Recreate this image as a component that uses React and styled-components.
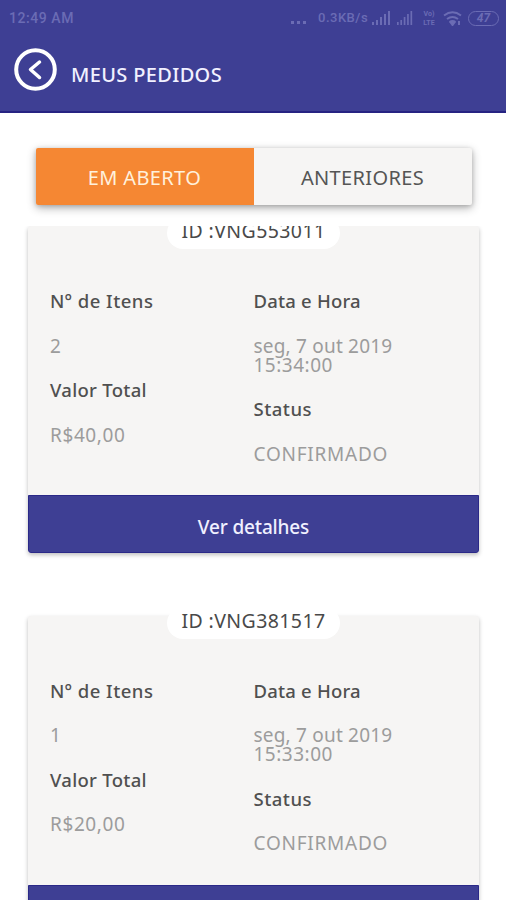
import React from "react";
import styled, { createGlobalStyle } from "styled-components";

const GlobalStyle = createGlobalStyle`
  * { box-sizing: border-box; }
  body {
    margin: 0;
    background: #fff;
    font-family: "Noto Sans", "Open Sans", sans-serif;
    overflow: hidden;
  }
`;

const Screen = styled.main`
  display: flex;
  flex-direction: column;
  width: 506px;
  height: 900px;
  overflow: hidden;
  background: #fff;
`;

const Header = styled.header`
  height: 113px;
  flex: none;
  background: #3e3f94;
  border-bottom: 2px solid #262382;
`;

const StatusBar = styled.div`
  display: flex;
  align-items: center;
  justify-content: space-between;
  height: 36px;
  padding: 0 7px 0 9px;
  color: #6b6cb4;
  font: 500 14px/16px Roboto, sans-serif;
`;

const Clock = styled.span`
  letter-spacing: 0.55px;
`;

const StatusIcons = styled.div`
  display: flex;
  align-items: center;
`;

const Speed = styled.span`
  font-size: 13px;
  width: 51px;
  margin-left: 11px;
  letter-spacing: 0.5px;
  white-space: nowrap;
`;

const VoLte = styled.span`
  display: flex;
  flex-direction: column;
  gap: 1px;
  width: 16px;
  margin: 0 6px 0 8px;
  font: 700 7px/8px Roboto, sans-serif;
  text-align: center;
`;

const Battery = styled.span`
  width: 31px;
  height: 15px;
  margin-left: 6px;
  border: 1.5px solid #6b6cb4;
  border-radius: 8px;
  font: italic 700 12px/12px Roboto, sans-serif;
  text-align: center;
`;

const Icon = styled.svg`
  display: block;
  flex: none;
  margin-left: ${(p) => p.$gap || 0}px;
`;

const TitleRow = styled.div`
  display: flex;
  align-items: center;
  padding: 11px 14px 0;
`;

const BackButton = styled.button`
  display: flex;
  padding: 0;
  border: 0;
  background: none;
`;

const Title = styled.h1`
  margin: 11px 0 0 14px;
  color: #f1f1ff;
  font-size: 20px;
  line-height: 24px;
  font-weight: 500;
  letter-spacing: 0.35px;
`;

const Tabs = styled.nav`
  display: grid;
  grid-template-columns: 218px 218px;
  flex: none;
  width: 436px;
  height: 57px;
  margin: 35px 0 21px 35.5px;
  border-radius: 2px;
  background: #f6f5f4;
  box-shadow: 0 3px 10px rgba(0, 0, 0, 0.3), 0 1px 4px rgba(0, 0, 0, 0.16);
`;

const Tab = styled.button`
  padding: 3px 0 0;
  border: 0;
  border-radius: 2px 0 0 2px;
  background: ${(p) => (p.$active ? "#f58733" : "transparent")};
  color: ${(p) => (p.$active ? "#fff0dc" : "#555")};
  font: 400 20px/24px "Noto Sans", sans-serif;
  letter-spacing: 0.35px;
`;

const OrderList = styled.section`
  display: flex;
  flex-direction: column;
  gap: 62.5px;
  flex: 1;
  min-height: 0;
  padding: 0 27px 0 28px;
  overflow: hidden;
`;

const Card = styled.article`
  display: flex;
  flex-direction: column;
  flex: none;
  height: 327px;
  border-radius: 3px;
  background: #f6f5f4;
  box-shadow: 0 2px 4px rgba(0, 0, 0, 0.26);
`;

const OrderId = styled.h2`
  align-self: center;
  flex: none;
  width: 173px;
  height: 32px;
  margin: -9px 0 0;
  border-radius: 16px;
  background: #fff;
  color: #494949;
  font-size: 19.5px;
  line-height: 27px;
  font-weight: 400;
  text-align: center;
  white-space: nowrap;
  letter-spacing: 0.4px;
`;

const Details = styled.div`
  display: grid;
  grid-template-columns: 203.5px 1fr;
  flex: 1;
  padding: 43px 22px 0;
`;

const Column = styled.dl`
  display: flex;
  flex-direction: column;
  gap: 25.6px;
  margin: 0;
`;

const Label = styled.dt`
  margin-bottom: 2px;
  color: #505050;
  font-size: 18.5px;
  line-height: 17px;
  font-weight: 500;
  white-space: nowrap;
  letter-spacing: ${(p) => p.$track}px;
`;

const Value = styled.dd`
  margin: 0;
  color: #9c9c9c;
  font-size: 19px;
  line-height: 19px;
  white-space: nowrap;
  letter-spacing: ${(p) => p.$track || 0}px;
`;

const ValueLine = styled.span`
  display: block;
  letter-spacing: ${(p) => p.$track}px;
`;

const DetailsButton = styled.button`
  flex: none;
  height: 58px;
  padding: 5px 0 0;
  border: 1px solid #2b2988;
  border-radius: 0 0 3px 3px;
  background: #3e3f94;
  color: #f0f0ff;
  font: 500 19px/24px "Noto Sans", sans-serif;
  letter-spacing: -0.15px;
`;

const orders = [
  { id: "VNG553011", items: "2", total: "R$40,00", day: "seg, 7 out 2019", time: "15:34:00" },
  { id: "VNG381517", items: "1", total: "R$20,00", day: "seg, 7 out 2019", time: "15:33:00" },
];

function Signal({ gap, width = 19 }) {
  return (
    <Icon $gap={gap} width={width} height="14" viewBox="0 0 19 14" preserveAspectRatio="none" fill="#6b6cb4">
      <path d="M0 11h2v3H0zM4 9h2v5H4zM8 6h2v8H8zM12 3h2v11h-2zM16 0h2v14h-2z" />
    </Icon>
  );
}

function Order({ order }) {
  return (
    <Card>
      <OrderId>ID :{order.id}</OrderId>
      <Details>
        <Column>
          <Label $track={0.5}>Nº de Itens</Label>
          <Value>{order.items}</Value>
          <Label $track={0.3}>Valor Total</Label>
          <Value $track={0.6}>{order.total}</Value>
        </Column>
        <Column>
          <Label $track={0.2}>Data e Hora</Label>
          <Value>
            <ValueLine $track={0.2}>{order.day}</ValueLine>
            <ValueLine $track={0.5}>{order.time}</ValueLine>
          </Value>
          <Label $track={0.5}>Status</Label>
          <Value $track={0.75}>CONFIRMADO</Value>
        </Column>
      </Details>
      <DetailsButton>Ver detalhes</DetailsButton>
    </Card>
  );
}

export default function App() {
  return (
    <Screen>
      <GlobalStyle />
      <Header>
        <StatusBar>
          <Clock>12:49 AM</Clock>
          <StatusIcons>
            <Icon width="16" height="14" viewBox="0 0 16 14" fill="#6b6cb4">
              <path d="M0 10h3v3H0zM6 10h3v3H6zM12 10h3v3h-3z" />
            </Icon>
            <Speed>0.3KB/s</Speed>
            <Signal gap={3} />
            <Signal gap={6} width={16} />
            <VoLte>
              <span>Vo)</span>
              <span>LTE</span>
            </VoLte>
            <Icon width="19" height="16" viewBox="0 0 19 16" fill="none" stroke="#6b6cb4" strokeWidth="2">
              <path d="M1 5.500Q9.500-1 18 5.500M4 9q5.500-4 11 0M6.500 12q3-2 6 0" />
              <path d="M8 13l1.500 2 1.500-2zM16 11v4" />
            </Icon>
            <Battery>47</Battery>
          </StatusIcons>
        </StatusBar>
        <TitleRow>
          <BackButton aria-label="Voltar">
            <Icon width="43" height="45" viewBox="0 0 43 45" fill="none" stroke="#fff">
              <circle cx="21.500" cy="22.500" r="19.300" strokeWidth="4" />
              <path d="M25.500 15l-9 7.500 9 8" strokeWidth="3.500" strokeLinecap="round" strokeLinejoin="round" />
            </Icon>
          </BackButton>
          <Title>MEUS PEDIDOS</Title>
        </TitleRow>
      </Header>
      <Tabs>
        <Tab $active>EM ABERTO</Tab>
        <Tab>ANTERIORES</Tab>
      </Tabs>
      <OrderList>
        {orders.map((o) => (
          <Order key={o.id} order={o} />
        ))}
      </OrderList>
    </Screen>
  );
}
